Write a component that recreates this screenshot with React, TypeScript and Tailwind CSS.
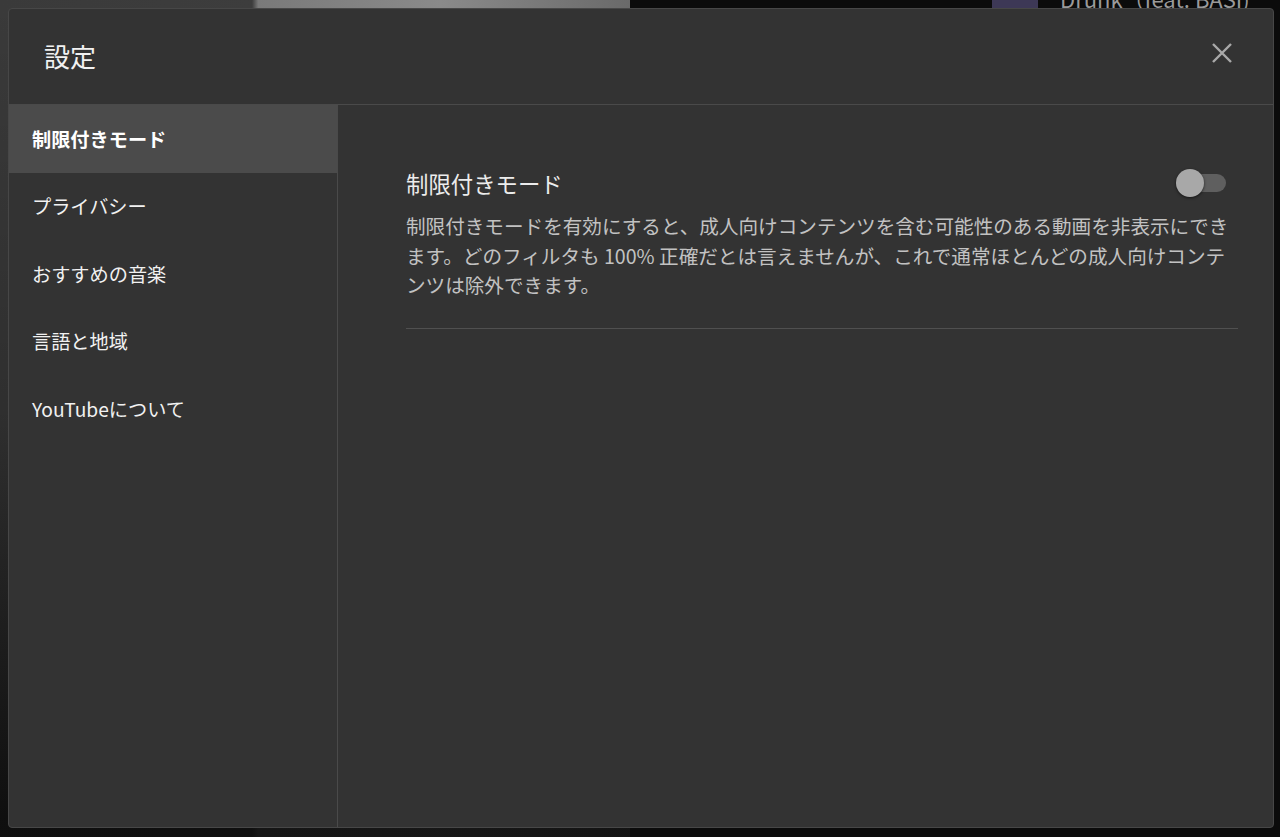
import React from "react";

const items = ["制限付きモード", "プライバシー", "おすすめの音楽", "言語と地域", "YouTubeについて"];

export default function App() {
  const font = { fontFamily: '"Noto Sans CJK JP", "Noto Sans", Roboto, sans-serif' };
  return (
    <div className="relative w-[1280px] h-[837px] overflow-hidden bg-[#0b0b0b]" style={font}>
      {/* page behind the modal */}
      <div className="flex h-full w-full">
        <div className="relative w-[630px] h-full bg-[linear-gradient(90deg,#3a3a3a_0%,#3d3d3d_40%,#7a7a7a_41%,#8a8a8a_70%,#6a6a6a_100%)]">
          <div className="absolute inset-0 bg-[linear-gradient(180deg,rgba(0,0,0,0)_0%,rgba(0,0,0,0.2)_50%,rgba(10,10,10,0.9)_98%)]" />
        </div>
        <div className="flex-1 h-full bg-[#0b0b0b] relative">
          <div className="absolute left-[362px] top-[-20px] w-[46px] h-[46px] bg-[#3d3856]" />
          <div className="absolute left-[430px] top-[-18px] text-[22px] text-[#9a9a9a] whitespace-nowrap">Drunk（feat. BASI)</div>
        </div>
      </div>

      {/* modal */}
      <div className="absolute left-[8px] top-[8px] w-[1266px] h-[820px] flex flex-col bg-[#333333] border border-[#474747] rounded-[4px] text-white">
        <div className="h-[96px] shrink-0 flex items-center justify-between pl-[35px] pr-[40px] border-b border-[#4a4a4a]">
          <div className="text-[26px] leading-none text-[#f1f1f1] mt-[-2px]">設定</div>
          <svg width="22" height="22" viewBox="0 0 22 22" className="mt-[-8px]">
            <path d="M2 2 L20 20 M20 2 L2 20" stroke="#a9a9a9" strokeWidth="2.4" strokeLinecap="butt" />
          </svg>
        </div>
        <div className="flex flex-1 min-h-0">
          <div className="w-[329px] shrink-0 border-r border-[#4a4a4a] flex flex-col">
            {items.map((t, i) => (
              <div
                key={t}
                className={
                  i === 0
                    ? "h-[68px] flex items-center pl-[23px] text-[19.2px] font-bold bg-[#4b4b4b] text-white"
                    : "h-[67.5px] flex items-center pl-[23px] text-[19.2px] text-[#f1f1f1]"
                }
              >
                {t}
              </div>
            ))}
          </div>
          <div className="flex-1 pl-[68px] pr-[35px] pt-[64px]">
            <div className="flex items-center justify-between">
              <div className="text-[22.4px] leading-[28px] text-[#ececec]">制限付きモード</div>
              <div className="relative w-[50px] h-[28px] mr-[12px] flex items-center">
                <div className="absolute left-[2px] right-0 h-[18px] rounded-full bg-[#5f5f5f]" />
                <div className="absolute left-0 w-[28px] h-[28px] rounded-full bg-[#a8a8a8] shadow-[0_1px_3px_rgba(0,0,0,0.6)]" />
              </div>
            </div>
            <p className="mt-[14px] text-[19.6px] leading-[29.5px] text-[#c2c2c2] pr-[2px]">
              制限付きモードを有効にすると、成人向けコンテンツを含む可能性のある動画を非表示にできます。どのフィルタも 100% 正確だとは言えませんが、これで通常ほとんどの成人向けコンテンツは除外できます。
            </p>
            <div className="mt-[28px] border-t border-[#505050]" />
          </div>
        </div>
      </div>
    </div>
  );
}
